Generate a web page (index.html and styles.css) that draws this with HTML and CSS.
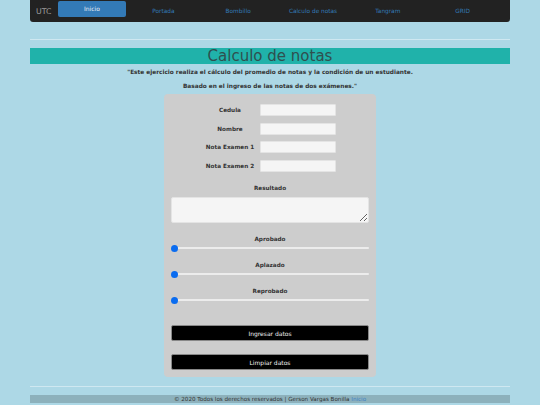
FILE: index.html
```html
<!DOCTYPE html>
<html lang="es">
<head>
<meta charset="utf-8">
<title>Calculo de notas</title>
<link rel="stylesheet" href="styles.css">
</head>
<body>
<div class="container">
  <nav class="navbar">
    <span class="brand">UTC</span>
    <a class="nav-item active" href="#">Inicio</a>
    <a class="nav-item" href="#">Portada</a>
    <a class="nav-item" href="#">Bombillo</a>
    <a class="nav-item" href="#">Calculo de notas</a>
    <a class="nav-item" href="#">Tangram</a>
    <a class="nav-item" href="#">GRID</a>
  </nav>
  <hr class="rule top-rule">
  <h1 class="title">Calculo de notas</h1>
  <p class="intro first">"Este ejercicio realiza el cálculo del promedio de notas y la condición de un estudiante.</p>
  <p class="intro second">Basado en el ingreso de las notas de dos exámenes."</p>

  <form class="card">
    <div class="fields">
      <label class="lbl">Cedula</label><input class="field" type="text">
      <label class="lbl">Nombre</label><input class="field" type="text">
      <label class="lbl">Nota Examen 1</label><input class="field" type="text">
      <label class="lbl">Nota Examen 2</label><input class="field" type="text">
    </div>
    <div class="lbl block result-lbl">Resultado</div>
    <textarea class="result"></textarea>
    <div class="lbl block range-lbl first-range">Aprobado</div>
    <input class="range" type="range" min="0" max="100" value="0">
    <div class="lbl block range-lbl">Aplazado</div>
    <input class="range" type="range" min="0" max="100" value="0">
    <div class="lbl block range-lbl">Reprobado</div>
    <input class="range" type="range" min="0" max="100" value="0">
    <button class="btn btn-first" type="button">Ingresar datos</button>
    <button class="btn btn-second" type="button">Limpiar datos</button>
  </form>

  <hr class="rule bottom-rule">
  <footer class="footer">© 2020 Todos los derechos reservados | Gerson Vargas Bonilla <a href="#" class="foot-link">Inicio</a></footer>
</div>
</body>
</html>
```
FILE: styles.css
```css
* { box-sizing: border-box; }
html, body { margin: 0; padding: 0; }
body {
  background: #add8e6;
  font-family: "DejaVu Sans", Verdana, sans-serif;
  color: #333;
  width: 540px;
  height: 405px;
  overflow: hidden;
}
.container {
  width: 480px;
  margin: 0 auto;
}
.navbar {
  height: 22px;
  background: #222;
  border-radius: 0 0 3px 3px;
  display: flex;
  align-items: center;
  padding: 0 10px 0 6px;
}
.brand {
  font-size: 7.8px;
  color: #9d9d9d;
  width: 22px;
}
.nav-item {
  flex: 1;
  text-align: center;
  font-size: 5.8px;
  color: #337ab7;
  text-decoration: none;
  line-height: 16px;
}
.nav-item.active {
  flex: 0 0 68px;
  background: #337ab7;
  color: #e8eef6;
  border-radius: 2px;
  align-self: flex-start;
  margin-top: 1px;
  font-size: 6px;
}
.rule {
  border: 0;
  border-top: 1px solid #cfe8f1;
  margin: 0;
}
.top-rule { margin-top: 17px; }
.title {
  margin: 8px 0 0;
  height: 16px;
  line-height: 16px;
  background: #20b2aa;
  color: #2f4f4f;
  font-size: 15px;
  font-weight: normal;
  text-align: center;
}
.intro {
  margin: 0;
  font-size: 5.8px;
  font-weight: bold;
  line-height: 8px;
  text-align: center;
  color: #333;
}
.intro.first { margin-top: 4px; }
.intro.second { margin-top: 6px; }
.card {
  width: 212px;
  margin: 4px auto 0;
  background: #cdcdcd;
  border-radius: 4px;
  padding: 10px 7px 7px;
  display: flex;
  flex-direction: column;
}
.fields {
  display: grid;
  grid-template-columns: 52px 76px;
  column-gap: 4px;
  row-gap: 6.5px;
  justify-content: center;
  align-items: center;
}
.lbl {
  font-size: 5.7px;
  font-weight: bold;
  color: #333;
  text-align: center;
  line-height: 8px;
  height: 8px;
  white-space: nowrap;
}
.field {
  height: 12px;
  width: 76px;
  margin: 0;
  border: 1px solid #e4e4e4;
  border-radius: 1px;
  background: #f5f5f5;
  padding: 0;
}
.result-lbl { margin-top: 12.5px; }
.result {
  margin-top: 5px;
  width: 198px;
  height: 26px;
  border: 1px solid #e4e4e4;
  border-radius: 2px;
  background: #f5f5f5;
  padding: 0;
  resize: vertical;
  display: block;
}
.range-lbl { margin-top: 8px; }
.range-lbl.first-range { margin-top: 12px; }
.range {
  -webkit-appearance: none;
  appearance: none;
  display: block;
  width: 198px;
  height: 10px;
  margin: 0;
  background: transparent;
  padding: 0;
}
.range::-webkit-slider-runnable-track {
  height: 2px;
  background: #ececec;
  border-radius: 1px;
}
.range::-webkit-slider-thumb {
  -webkit-appearance: none;
  width: 7px;
  height: 7px;
  border-radius: 50%;
  background: #0a6cf0;
  margin-top: -2.5px;
}
.btn {
  display: block;
  height: 16px;
  width: 198px;
  background: #000;
  color: #f2f2f2;
  border: 1px solid #888;
  border-radius: 2px;
  font-family: "DejaVu Sans", Verdana, sans-serif;
  font-size: 6px;
  padding: 0;
}
.btn-first { margin-top: 20px; }
.btn-second { margin-top: 13px; }
.bottom-rule { margin-top: 9px; }
.footer {
  margin-top: 8px;
  height: 8px;
  line-height: 8px;
  background: rgba(0, 0, 0, 0.18);
  font-size: 5.6px;
  text-align: center;
  color: #333;
}
.foot-link {
  color: #3b7fc4;
  text-decoration: none;
}
```
